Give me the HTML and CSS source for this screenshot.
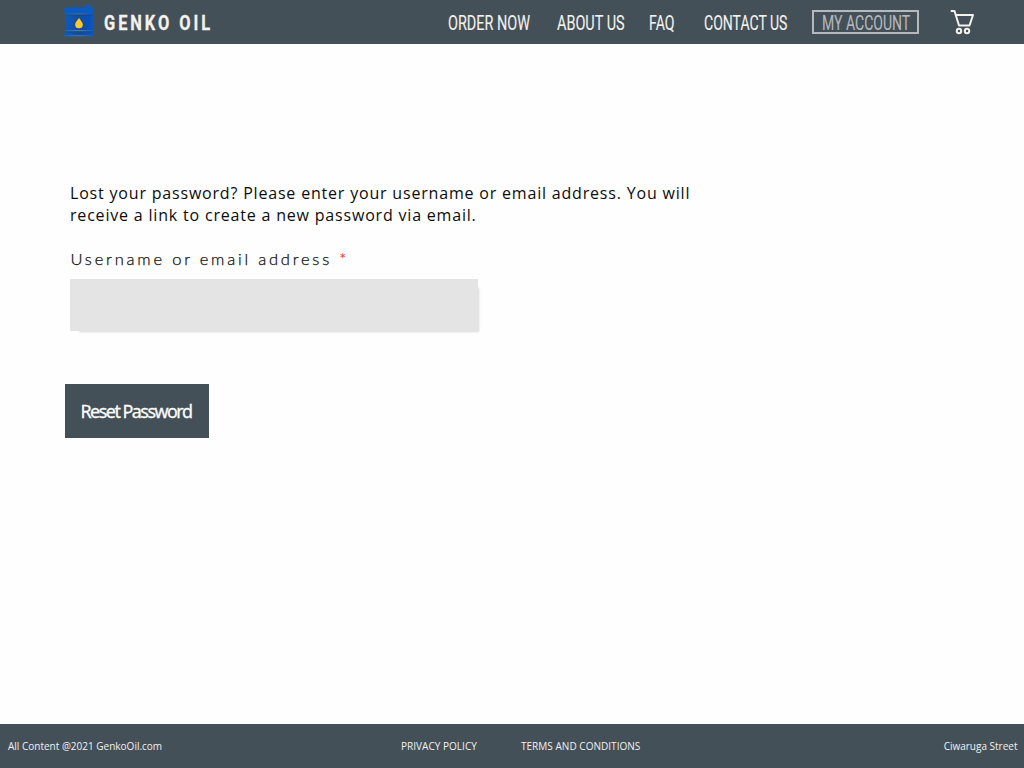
FILE: index.html
```html
<!DOCTYPE html>
<html lang="en">
<head>
<meta charset="utf-8">
<title>Genko Oil</title>
<link rel="stylesheet" href="styles.css">
</head>
<body>
<header class="header">
  <a class="brand">
    <svg class="barrel" width="32" height="34" viewBox="0 0 32 34">
      <defs>
        <linearGradient id="body"><stop offset="0" stop-color="#0b5cbb"/><stop offset=".25" stop-color="#1254ae"/><stop offset=".5" stop-color="#174a96"/><stop offset=".8" stop-color="#0c50b8"/><stop offset="1" stop-color="#0a58c0"/></linearGradient>
        <linearGradient id="rim"><stop offset="0" stop-color="#1465c2"/><stop offset=".5" stop-color="#4f8098"/><stop offset="1" stop-color="#0b5cc4"/></linearGradient>
      </defs>
      <rect x="22" y="1" width="6" height="3" rx="1" fill="#0d5cc4"/>
      <path d="M1.500 4Q16 2.500 31 4V9L30 10V26L31 31.500Q31 32.500 28 32.500H4Q1 32.500 1 31.500L2.500 26V10L1.500 9Z" fill="url(#body)"/>
      <path d="M1.500 4Q16 2.500 31 4V9Q16 10 1.500 9Z" fill="#0d5bc0"/>
      <path d="M2 9.400H30.500V10.400H2ZM2 26H30.500V27.200H2ZM1 31.200H31V32.200H1Z" fill="url(#rim)"/>
      <path d="M3 11H30M3 28H30" stroke="#174582" stroke-width=".6"/>
      <path d="M16 13.500C16.700 16 19.800 17.800 19.800 20.700A3.800 3.500 0 0 1 12.200 20.700C12.200 17.800 15.300 16 16 13.500Z" fill="#f9c82b"/>
    </svg>
    <svg class="brand-name" width="112" height="44"><text transform="translate(0 30) scale(.8 1)">GENKO OIL</text></svg>
  </a>
  <nav class="nav">
    <a><svg class="label" width="84" height="44"><text transform="translate(0 29.700) scale(.695 1)">ORDER NOW</text></svg></a>
    <a class="about"><svg class="label" width="70" height="44"><text transform="translate(0 29.700) scale(.695 1)">ABOUT US</text></svg></a>
    <a class="faq"><svg class="label" width="28" height="44"><text transform="translate(0 29.700) scale(.68 1)">FAQ</text></svg></a>
    <a class="contact"><svg class="label" width="86" height="44"><text transform="translate(0 29.700) scale(.675 1)">CONTACT US</text></svg></a>
    <a class="account"><svg class="label" width="92" height="20"><text transform="translate(0 17.700) scale(.675 1)">MY ACCOUNT</text></svg></a>
    <a class="cart"><svg width="26" height="26" viewBox="0 0 26 26" fill="none" stroke="#f4f2ed" stroke-width="2" stroke-linejoin="round" stroke-linecap="round"><path d="M1.500 2H4.500L9 16.500H19.500L23 6H6"/><circle cx="9" cy="22" r="2.200"/><circle cx="17" cy="22" r="2.200"/></svg></a>
  </nav>
</header>
<main class="main">
  <p class="intro">Lost your password? Please enter your username or email address. You will<br>receive a link to create a new password via email.</p>
  <form class="form">
    <label class="field-label" for="user">Username or email address <span class="required">*</span></label>
    <input class="field" id="user" type="text">
    <button class="reset" type="button">Reset Password</button>
  </form>
</main>
<footer class="footer">
  <span class="copyright">All Content @2021 GenkoOil.com</span>
  <a class="privacy">PRIVACY POLICY</a>
  <a class="terms">TERMS AND CONDITIONS</a>
  <span class="street">Ciwaruga Street</span>
</footer>
</body>
</html>
```
FILE: styles.css
```css
* { box-sizing: border-box; }
body {
  margin: 0;
  height: 100vh;
  display: flex;
  flex-direction: column;
  background: #fefefe;
  color: #0c0c0c;
  font-family: "Open Sans", sans-serif;
  overflow: hidden;
}
svg { display: block; flex: none; overflow: visible; }
.header {
  flex: none;
  height: 44px;
  display: flex;
  align-items: center;
  background: #445058;
  padding-left: 63px;
}
.brand { display: flex; align-items: center; gap: 9px; }
.barrel { margin-bottom: 2px; }
.brand-name {
  font: 700 20.5px Roboto, sans-serif;
  letter-spacing: 3.7px;
  fill: #f4f2ed;
  stroke: #f4f2ed;
  stroke-width: .3px;
}
.nav { display: flex; align-items: center; margin-left: 231.5px; }
.label { font: 400 20.8px Roboto, sans-serif; fill: #f4f2ed; stroke: #f4f2ed; stroke-width: .1px; }
.about { margin-left: 25.5px; }
.faq { margin-left: 22px; }
.contact { margin-left: 27px; }
.account {
  margin-left: 22px;
  width: 107px;
  height: 24px;
  border: 2px solid #b4b9bd;
  padding-left: 8px;
}
.account .label { fill: #b4b9bd; stroke: #b4b9bd; }
.cart { margin-left: 31px; }
.main { flex: 1; padding: 138px 0 0 65px; }
.intro {
  margin: 0 0 0 5px;
  font-size: 16px;
  line-height: 22px;
  letter-spacing: .81px;
}
.form { display: flex; flex-direction: column; align-items: flex-start; }
.field-label {
  margin: 22px 0 0 5.5px;
  height: 31px;
  font: 300 16.5px/23px Lato, sans-serif;
  letter-spacing: 2.8px;
  white-space: pre;
  -webkit-text-stroke: .25px #0c0c0c;
}
.required { color: #f33; -webkit-text-stroke-color: #f33; }
.field {
  margin-left: 5px;
  width: 408px;
  height: 52px;
  border: 0;
  background: #e4e4e4;
  box-shadow: 5px 5px 2px -4px #d8d8d8;
}
.reset {
  margin-top: 53px;
  width: 144px;
  height: 54px;
  padding: 0 0 0 15.5px;
  text-align: left;
  border: 0;
  background: #445058;
  color: #fff;
  font: 400 18px "Open Sans", sans-serif;
  letter-spacing: -1.5px;
  -webkit-text-stroke: .35px #fff;
}
.footer {
  flex: none;
  height: 44px;
  display: grid;
  grid-template-columns: 393px 120px 1fr auto;
  align-items: center;
  padding: 0 6.5px 0 8px;
  background: #445058;
  color: #f0f1f2;
  font-size: 10px;
}
.privacy, .terms { letter-spacing: .03px; }
```
